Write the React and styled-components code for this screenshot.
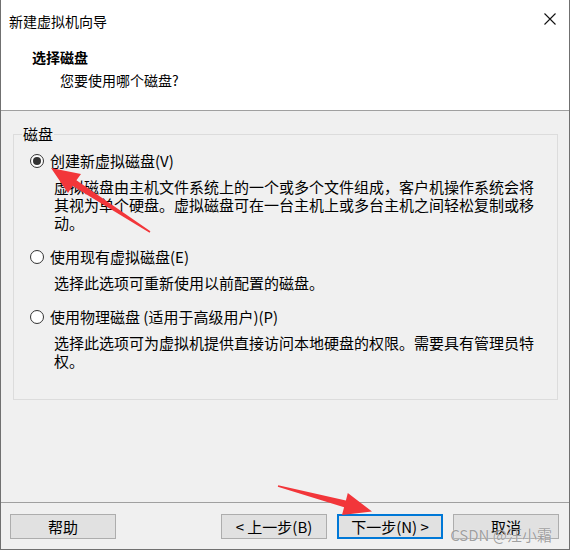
import React from "react";
import styled, { createGlobalStyle } from "styled-components";

const GlobalStyle = createGlobalStyle`
  html, body {
    margin: 0;
    padding: 0;
    background: #ffffff;
  }
  body {
    font-family: "Noto Sans CJK SC", "Noto Sans", sans-serif;
    color: #000;
  }
`;

const options = [
  {
    label: "创建新虚拟磁盘(V)",
    checked: true,
    desc: "虚拟磁盘由主机文件系统上的一个或多个文件组成，客户机操作系统会将其视为单个硬盘。虚拟磁盘可在一台主机上或多台主机之间轻松复制或移动。",
  },
  {
    label: "使用现有虚拟磁盘(E)",
    checked: false,
    desc: "选择此选项可重新使用以前配置的磁盘。",
  },
  {
    label: "使用物理磁盘 (适用于高级用户)(P)",
    checked: false,
    desc: "选择此选项可为虚拟机提供直接访问本地硬盘的权限。需要具有管理员特权。",
  },
];

const App = () => {
  return (
    <Page>
      <GlobalStyle />
      <Window>
        <Header>
          <TitleBar>
            <TitleText>新建虚拟机向导</TitleText>
            <CloseButton>
              <svg width="12" height="12" viewBox="0 0 12 12">
                <path d="M0.5 0.5 L11.5 11.5 M11.5 0.5 L0.5 11.5" stroke="#111" strokeWidth="1.1" fill="none" />
              </svg>
            </CloseButton>
          </TitleBar>
          <HeadTitle>选择磁盘</HeadTitle>
          <HeadSub>您要使用哪个磁盘?</HeadSub>
        </Header>

        <Body>
          <Group>
            <Legend>磁盘</Legend>
            {options.map((o, i) => (
              <Option key={i} $first={i === 0}>
                <OptionRow>
                  <Radio $checked={o.checked} />
                  <span>{o.label}</span>
                </OptionRow>
                <Desc>{o.desc}</Desc>
              </Option>
            ))}
          </Group>
        </Body>

        <Footer>
          <Button $left>帮助</Button>
          <Button>&lt; 上一步(B)</Button>
          <Button $primary>下一步(N) &gt;</Button>
          <Button>取消</Button>
        </Footer>
      </Window>

      <Watermark>CSDN @汪小霜</Watermark>

      <Arrows width="570" height="551" viewBox="0 0 570 551">
        <polygon
          points="51,168 81,174 76.4,180.2 150.4,231.3 149.6,232.7 72.6,186 68,193"
          fill="#f2363a"
        />
        <polygon
          points="372,511.5 347.8,493 345.9,500.4 278.2,485.2 277.8,486.8 344.1,507.2 342,515"
          fill="#f2363a"
        />
      </Arrows>
    </Page>
  );
};

export default App;

const Page = styled.div`
  position: relative;
  width: 570px;
  height: 551px;
  background: #ffffff;
`;

const Window = styled.div`
  width: 570px;
  height: 550px;
  box-sizing: border-box;
  border-left: 1px solid #707070;
  border-right: 1px solid #707070;
  border-bottom: 1px solid #707070;
  display: flex;
  flex-direction: column;
`;

const Header = styled.div`
  height: 111px;
  box-sizing: border-box;
  background: #ffffff;
  border-bottom: 1px solid #a0a0a0;
`;

const TitleBar = styled.div`
  height: 40px;
  display: flex;
  align-items: center;
  justify-content: space-between;
  padding: 0 13px 0 8px;
`;

const TitleText = styled.div`
  font-size: 14px;
  line-height: 18px;
  padding-top: 2px;
`;

const CloseButton = styled.div`
  width: 12px;
  height: 12px;
  display: flex;
  margin-top: -3px;
`;

const HeadTitle = styled.div`
  margin: 8px 0 0 31px;
  font-size: 14px;
  font-weight: 700;
  line-height: 18px;
`;

const HeadSub = styled.div`
  margin: 5px 0 0 59px;
  font-size: 14px;
  line-height: 18px;
`;

const Body = styled.div`
  flex: 1;
  background: #f0f0f0;
  padding: 14px 11px 0 12px;
`;

const Group = styled.fieldset`
  margin: 0;
  min-width: 0;
  padding: 0 0 29px 16px;
  border: 1px solid #dcdcdc;
`;

const Legend = styled.legend`
  margin-left: -8px;
  padding: 0 1px;
  font-size: 15px;
  line-height: 18px;
`;

const Option = styled.div`
  margin-top: ${(p) => (p.$first ? "8px" : "15px")};
`;

const OptionRow = styled.div`
  display: flex;
  align-items: center;
  gap: 6px;
  height: 20px;
  font-size: 15px;
  line-height: 20px;
`;

const Radio = styled.span`
  position: relative;
  width: 14px;
  height: 14px;
  box-sizing: border-box;
  border-radius: 50%;
  border: 1px solid #333333;
  background: #ffffff;
  flex-shrink: 0;

  &::after {
    content: "";
    display: ${(p) => (p.$checked ? "block" : "none")};
    position: absolute;
    left: 2px;
    top: 2px;
    width: 8px;
    height: 8px;
    border-radius: 50%;
    background: #333333;
  }
`;

const Desc = styled.div`
  margin: 7px 0 0 24px;
  width: 486px;
  font-size: 15px;
  line-height: 18px;
`;

const Footer = styled.div`
  height: 47px;
  box-sizing: border-box;
  border-top: 1px solid #a0a0a0;
  background: #f0f0f0;
  display: flex;
  gap: 10px;
  padding: 11px 10px 0 9px;
`;

const Button = styled.div`
  width: 106px;
  height: 25px;
  box-sizing: border-box;
  display: flex;
  align-items: center;
  justify-content: center;
  background: #e1e1e1;
  border: ${(p) => (p.$primary ? "2px solid #0078d7" : "1px solid #adadad")};
  margin-right: ${(p) => (p.$left ? "auto" : "0")};
  font-size: 15px;
  line-height: 18px;
`;

const Watermark = styled.div`
  position: absolute;
  right: 18px;
  bottom: 7px;
  font-size: 15px;
  line-height: 18px;
  color: rgba(130, 130, 130, 0.75);
  text-shadow: 0 0 1px rgba(255, 255, 255, 0.9);
  pointer-events: none;
`;

const Arrows = styled.svg`
  position: absolute;
  left: 0;
  top: 0;
  pointer-events: none;
`;
